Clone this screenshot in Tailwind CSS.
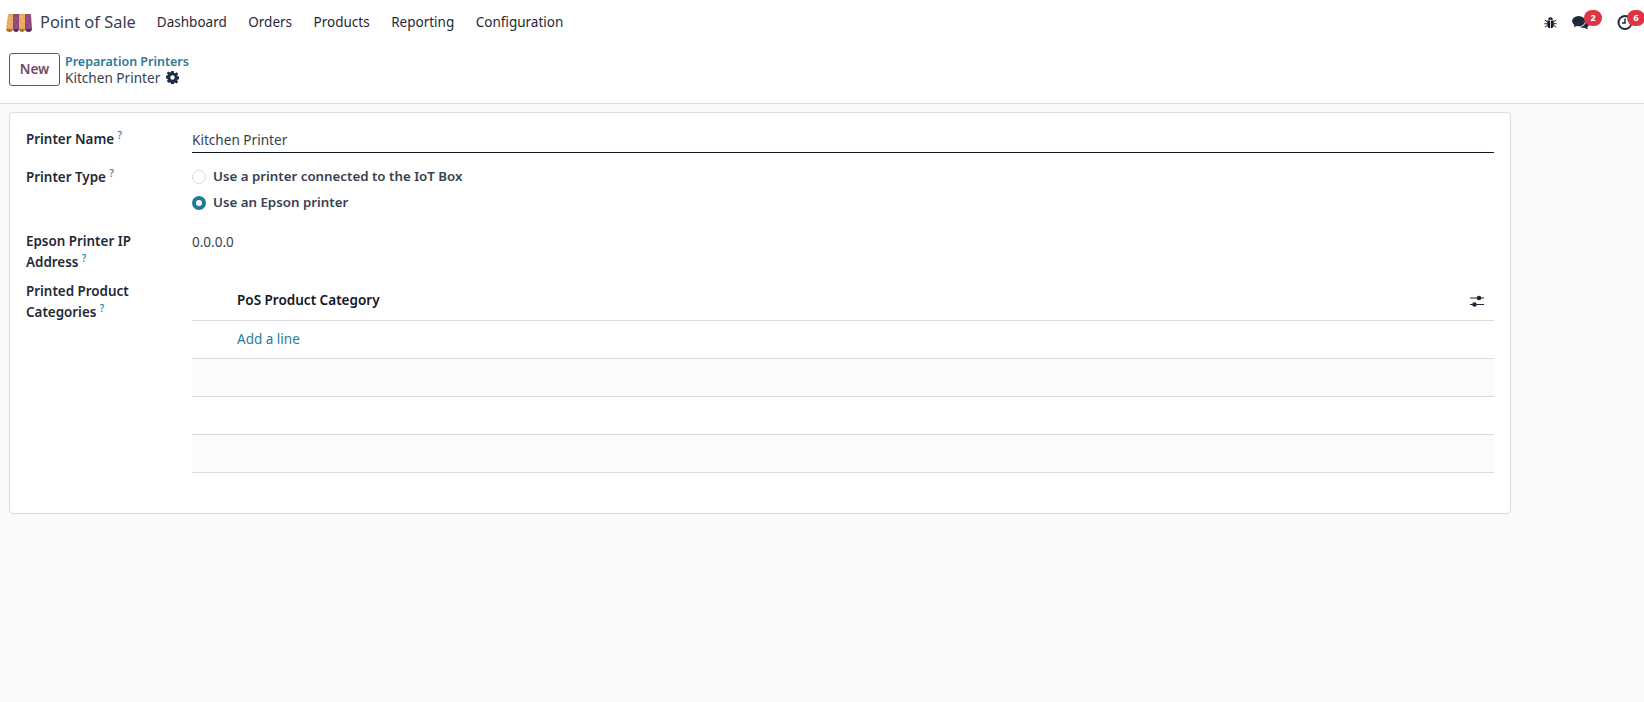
<!DOCTYPE html>
<html lang="en">
<head>
  <meta charset="UTF-8" />
  <title>Point of Sale</title>
  <script src="https://cdn.jsdelivr.net/npm/@tailwindcss/browser@4"></script>
</head>
<body class="bg-[#f9fafb] text-[#374151] font-['Noto_Sans',sans-serif] text-[13.5px] h-[702px] overflow-hidden">

  <!-- Top nav -->
  <nav class="bg-white h-[46px] flex items-center pl-[6px] pr-[11px] pb-[2px]">
    <svg class="w-[26px] h-[18px] mt-[2px]" viewBox="0 0 26 18">
      <path d="M2 1q0-1 1-1h4v15H0z" fill="#e8a95f"/>
      <path d="M7 0h6v15H7z" fill="#8f4a7c"/>
      <path d="M13 0h6v15h-6z" fill="#e8a95f"/>
      <path d="M19 0h5q1 0 1 1l1 14h-7z" fill="#8f4a7c"/>
      <path d="M0 15h7q-.5 3-3.500 3T0 15z" fill="#a8713a"/>
      <path d="M7 15h6q-.5 3-3 3t-3-3z" fill="#5f2c50"/>
      <path d="M13 15h6q-.5 3-3 3t-3-3z" fill="#a8713a"/>
      <path d="M19 15h7q-.5 3-3.500 3T19 15z" fill="#5f2c50"/>
      <g fill="#f6dcb4">
        <circle cx="4" cy="4" r=".6"/><circle cx="5" cy="9" r=".6"/><circle cx="3" cy="12" r=".6"/>
        <circle cx="15" cy="3" r=".6"/><circle cx="17" cy="7" r=".6"/><circle cx="15" cy="11" r=".6"/>
      </g>
      <g fill="#b985a8">
        <circle cx="10" cy="4" r=".6"/><circle cx="9" cy="8" r=".6"/><circle cx="11" cy="12" r=".6"/>
        <circle cx="22" cy="4" r=".6"/><circle cx="21" cy="9" r=".6"/><circle cx="23" cy="12" r=".6"/>
      </g>
    </svg>
    <span class="ml-[8px] text-[16.400px] text-[#374151]">Point of Sale</span>
    <div class="flex ml-[21px] gap-[21.500px] text-[13.500px] text-[#1f2937]">
      <span>Dashboard</span>
      <span>Orders</span>
      <span>Products</span>
      <span>Reporting</span>
      <span>Configuration</span>
    </div>
    <div class="ml-auto flex items-center">
      <svg class="w-[13px] h-[13px] mr-[15px]" viewBox="0 0 16 16" fill="#111827">
        <path d="M5 4.500a3 3 0 0 1 6 0z"/>
        <path d="M4 5.500h3.500V15Q4 14.500 4 11zM8.500 5.500H12V11q0 3.500-3.500 4z"/>
        <path d="M1 5l3 2M15 5l-3 2M.5 9.500h3.500M15.500 9.500H12M1 14l3-2.500M15 14l-3-2.500" stroke="#111827" stroke-width="1.200"/>
      </svg>
      <div class="relative mr-[28px]">
        <svg class="w-[17px] h-[15px] block" viewBox="0 0 18 16" fill="#1f2937">
          <ellipse cx="7" cy="6.500" rx="7" ry="5.500"/>
          <path d="M3 10l-1.500 3 4-1.500z"/>
          <path d="M15 6q3 1.500 3 4 0 2-2 3l1 2.500-4-2q-3 .5-5-1 6 0 7-6.500z"/>
        </svg>
        <span class="absolute -top-[5px] left-[12px] w-[18px] h-[16px] rounded-full bg-[#dc3545] text-white text-[9px] font-bold flex items-center justify-center">2</span>
      </div>
      <div class="relative">
        <svg class="w-[16px] h-[15px] block" viewBox="0 0 16 15" fill="none" stroke="#1f2937">
          <circle cx="8" cy="7.500" r="6.500" stroke-width="2"/>
          <path d="M8 3.500v4.500h-3" stroke-width="1.500"/>
        </svg>
        <span class="absolute -top-[5px] left-[10px] w-[18px] h-[16px] rounded-full bg-[#dc3545] text-white text-[9px] font-bold flex items-center justify-center">6</span>
      </div>
    </div>
  </nav>

  <!-- Control panel -->
  <div class="bg-white h-[58px] border-b border-[#d8dadd] flex items-start pl-[9px] pt-[7px]">
    <button class="w-[51px] h-[33px] rounded-[3px] border border-[#714b67] text-[#714b67] font-semibold text-[13.500px] leading-none">New</button>
    <div class="ml-[5px] flex flex-col">
      <span class="text-[#2a7a9c] text-[12.500px] font-semibold leading-[17px]">Preparation Printers</span>
      <div class="flex items-center leading-[15px] text-[13.600px]">
        <span>Kitchen Printer</span>
        <svg class="ml-[6px] w-[13px] h-[13px]" viewBox="0 0 16 16" fill="#1f2d45">
          <path fill-rule="evenodd" d="M6.500 0h3l.4 2.200 1.300.6L13 1.500l2 2-1.300 1.800.6 1.300 2.200.4v3l-2.200.4-.6 1.300 1.300 1.800-2 2-1.800-1.300-1.300.6-.4 2.200h-3l-.4-2.200-1.300-.6L3 14.500l-2-2 1.300-1.800-.6-1.300L-.5 9V6l2.200-.4.6-1.300L1 2.500l2-2 1.800 1.300 1.300-.6zM8 5.300a2.700 2.700 0 1 0 0 5.400 2.700 2.700 0 0 0 0-5.400z"/>
        </svg>
      </div>
    </div>
  </div>

  <!-- Form sheet -->
  <div class="pt-[8px] pl-[9px]">
    <div class="w-[1502px] h-[402px] bg-white border border-[#d8dadd] rounded-[4px] px-[16px] pt-[16px]">
      <div class="grid grid-cols-[166px_1fr]">

        <div class="font-semibold text-[13.400px] text-[#1f2937] h-[24px] leading-[20px]">Printer Name <sup class="inline-block leading-[10px] text-[#2a7a9c] text-[10px] font-medium">?</sup></div>
        <div class="h-[24px] border-b border-[#111827] leading-[20px] pt-[1px] text-[13.600px]">Kitchen Printer</div>

        <div class="font-semibold text-[13.400px] text-[#1f2937] leading-[20px] pt-[14px]">Printer Type <sup class="inline-block leading-[10px] text-[#2a7a9c] text-[10px] font-medium">?</sup></div>
        <div class="pt-[14px] h-[78px] flex flex-col gap-[6px] font-semibold text-[13.300px]">
          <div class="flex items-center h-[20px]">
            <span class="w-[14px] h-[14px] rounded-full border border-[#d8dadd] bg-white"></span>
            <span class="ml-[7px]">Use a printer connected to the IoT Box</span>
          </div>
          <div class="flex items-center h-[20px]">
            <span class="w-[14px] h-[14px] rounded-full border-[4px] border-[#1f7a9c] bg-white"></span>
            <span class="ml-[7px]">Use an Epson printer</span>
          </div>
        </div>

        <div class="font-semibold text-[13.400px] text-[#1f2937] leading-[21px] h-[50px] w-[130px]">Epson Printer IP Address <sup class="inline-block leading-[10px] text-[#2a7a9c] text-[10px] font-medium">?</sup></div>
        <div class="h-[50px] leading-[21px] pt-[1px]">0.0.0.0</div>

        <div class="font-semibold text-[13.400px] text-[#1f2937] leading-[21px] w-[130px]">Printed Product Categories <sup class="inline-block leading-[10px] text-[#2a7a9c] text-[10px] font-medium">?</sup></div>
        <div>
          <div class="h-[40px] border-b border-[#d8dadd] flex items-center justify-between pl-[45px] pr-[10px] font-semibold text-[13.500px] text-[#111827]">
            <span>PoS Product Category</span>
            <svg class="w-[14px] h-[12px]" viewBox="0 0 14 12" fill="#1f2937">
              <rect x="0" y="2.500" width="14" height="1"/>
              <rect x="0" y="9" width="14" height="1"/>
              <circle cx="9" cy="3" r="2.300"/>
              <circle cx="4.500" cy="9.500" r="2.300"/>
            </svg>
          </div>
          <div class="h-[38px] border-b border-[#d8dadd] flex items-center pl-[45px] text-[#2a7a9c]">Add a line</div>
          <div class="h-[38px] border-b border-[#d8dadd] bg-[#fbfbfb]"></div>
          <div class="h-[38px] border-b border-[#d8dadd]"></div>
          <div class="h-[38px] border-b border-[#d8dadd] bg-[#fbfbfb]"></div>
        </div>

      </div>
    </div>
  </div>

</body>
</html>
